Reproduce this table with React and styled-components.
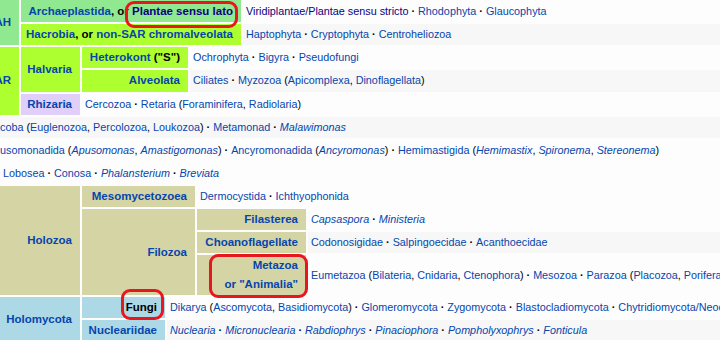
import React from 'react'
import styled, { createGlobalStyle } from 'styled-components'

const GREEN = '#90e890'
const LIME = '#adff2f'
const LAVENDER = '#e0cff8'
const OLIVE = '#d4d4a4'
const SKY = '#add8e6'

const GlobalStyle = createGlobalStyle`
  html, body {
    margin: 0;
    padding: 0;
    background: #fdfdfd;
  }
  body {
    font-family: "Liberation Sans", Arial, sans-serif;
    font-size: 10.8px;
    color: #000;
  }
`

const Navbox = styled.div`
  width: 720px;
  height: 340px;
  overflow: hidden;
  display: flex;
  flex-direction: column;
  gap: 2px;
  background: #fdfdfd;
  white-space: nowrap;
`

const Row = styled.div`
  display: flex;
  gap: 2px;
  height: ${p => (p.$h ? `${p.$h}px` : 'auto')};
  flex: 0 0 auto;
`

const Stack = styled.div`
  flex: 1 1 0;
  min-width: 0;
  display: flex;
  flex-direction: column;
  gap: 2px;
`

const Group = styled.div`
  flex: 0 0 ${p => p.$w}px;
  width: ${p => p.$w}px;
  box-sizing: border-box;
  padding-right: 8px;
  background: ${p => p.$bg};
  display: flex;
  align-items: center;
  justify-content: flex-end;
  text-align: right;
  font-weight: bold;
  font-size: 11.5px;
  line-height: 19px;
  color: #000;
`

const List = styled.div`
  flex: 1 1 0;
  min-width: 0;
  overflow: hidden;
  box-sizing: border-box;
  padding-left: ${p => (p.$cut ? 0 : 3)}px;
  background: ${p => (p.$even ? '#f7f7f7' : '#fdfdfd')};
  display: flex;
  align-items: center;
  line-height: 19px;
`

const Link = styled.span`
  color: ${p => (p.$visited ? '#0b0080' : '#0645ad')};
`

const Self = styled.span`
  color: #000;
`

const Dot = styled.b`
  font-weight: bold;
`

// red marker rings drawn over the screenshot
const Marked = styled.span`
  position: relative;
  display: inline-block;
  line-height: 19px;
`

const Ring = styled.span`
  position: absolute;
  top: ${p => p.$t}px;
  right: ${p => p.$r}px;
  bottom: ${p => p.$b}px;
  left: ${p => p.$l}px;
  border: 3.5px solid #e8161e;
  border-radius: 9px;
  pointer-events: none;
`

const Hlist = ({ items }) => (
  <span>
    {items.map((it, i) => (
      <React.Fragment key={i}>
        {i > 0 && <Dot> · </Dot>}
        {it}
      </React.Fragment>
    ))}
  </span>
)

const L = ({ children, v }) => <Link $visited={v}>{children}</Link>
const I = ({ children }) => <Link as="i">{children}</Link>

const App = () => (
  <>
    <GlobalStyle />
    <Navbox>
      <Row>
        <Group $w={19} $bg={GREEN}>
          <Link>AH</Link>
        </Group>
        <Stack>
          <Row $h={22}>
            <Group $w={220} $bg={GREEN}>
              <span>
                <Link>Archaeplastida</Link>, or{' '}
                <Marked>
                  <Link $visited>Plantae sensu lato</Link>
                  <Ring $t={-1} $r={-5} $b={-7} $l={-7} />
                </Marked>
              </span>
            </Group>
            <List>
              <Hlist
                items={[
                  <L v>Viridiplantae/Plantae sensu stricto</L>,
                  <L>Rhodophyta</L>,
                  <L>Glaucophyta</L>,
                ]}
              />
            </List>
          </Row>
          <Row $h={21.2}>
            <Group $w={220} $bg={LIME}>
              <span>
                <Link>Hacrobia</Link>, or <Link>non-SAR chromalveolata</Link>
              </span>
            </Group>
            <List $even>
              <Hlist items={[<L>Haptophyta</L>, <L>Cryptophyta</L>, <L>Centroheliozoa</L>]} />
            </List>
          </Row>
        </Stack>
      </Row>

      <Row>
        <Group $w={19} $bg={LIME}>
          <Link>AR</Link>
        </Group>
        <Stack>
          <Row>
            <Group $w={59} $bg={LIME}>
              <Link>Halvaria</Link>
            </Group>
            <Stack>
              <Row $h={21.2}>
                <Group $w={106} $bg={LIME}>
                  <span>
                    <Link>Heterokont</Link> ("S")
                  </span>
                </Group>
                <List>
                  <Hlist items={[<L>Ochrophyta</L>, <L>Bigyra</L>, <L>Pseudofungi</L>]} />
                </List>
              </Row>
              <Row $h={21.2}>
                <Group $w={106} $bg={LIME}>
                  <Link>Alveolata</Link>
                </Group>
                <List $even>
                  <Hlist
                    items={[
                      <L>Ciliates</L>,
                      <span>
                        <L>Myzozoa</L> (<L>Apicomplexa</L>, <L>Dinoflagellata</L>)
                      </span>,
                    ]}
                  />
                </List>
              </Row>
            </Stack>
          </Row>
          <Row $h={21.2}>
            <Group $w={59} $bg={LAVENDER}>
              <Link>Rhizaria</Link>
            </Group>
            <List>
              <Hlist
                items={[
                  <L>Cercozoa</L>,
                  <span>
                    <L>Retaria</L> (<L>Foraminifera</L>, <L>Radiolaria</L>)
                  </span>,
                ]}
              />
            </List>
          </Row>
        </Stack>
      </Row>

      <Row $h={21.2}>
        <List $even $cut>
          <Hlist
            items={[
              <span>
                <L>coba</L> (<L>Euglenozoa</L>, <L>Percolozoa</L>, <L>Loukozoa</L>)
              </span>,
              <L>Metamonad</L>,
              <I>Malawimonas</I>,
            ]}
          />
        </List>
      </Row>
      <Row $h={21.2}>
        <List $cut>
          <Hlist
            items={[
              <span>
                <L>usomonadida</L> (<I>Apusomonas</I>, <I>Amastigomonas</I>)
              </span>,
              <span>
                <L>Ancyromonadida</L> (<I>Ancyromonas</I>)
              </span>,
              <span>
                <L>Hemimastigida</L> (<I>Hemimastix</I>, <I>Spironema</I>, <I>Stereonema</I>)
              </span>,
            ]}
          />
        </List>
      </Row>
      <Row $h={21.2}>
        <List>
          <Hlist items={[<L>Lobosea</L>, <L>Conosa</L>, <I>Phalansterium</I>, <I>Breviata</I>]} />
        </List>
      </Row>

      <Row>
        <Group $w={80} $bg={OLIVE}>
          <Link>Holozoa</Link>
        </Group>
        <Stack>
          <Row $h={21}>
            <Group $w={113} $bg={OLIVE}>
              <Link>Mesomycetozoea</Link>
            </Group>
            <List>
              <Hlist items={[<L>Dermocystida</L>, <L>Ichthyophonida</L>]} />
            </List>
          </Row>
          <Row>
            <Group $w={113} $bg={OLIVE}>
              <Link>Filozoa</Link>
            </Group>
            <Stack>
              <Row $h={21}>
                <Group $w={109} $bg={OLIVE}>
                  <Link>Filasterea</Link>
                </Group>
                <List>
                  <Hlist items={[<I>Capsaspora</I>, <I>Ministeria</I>]} />
                </List>
              </Row>
              <Row $h={21}>
                <Group $w={109} $bg={OLIVE}>
                  <Link>Choanoflagellate</Link>
                </Group>
                <List $even>
                  <Hlist items={[<L>Codonosigidae</L>, <L>Salpingoecidae</L>, <L>Acanthoecidae</L>]} />
                </List>
              </Row>
              <Row $h={40}>
                <Group $w={109} $bg={OLIVE}>
                  <Marked>
                    <Link>
                      Metazoa
                      <br />
                      or "Animalia"
                    </Link>
                    <Ring $t={-2} $r={-10} $b={-4} $l={-15} />
                  </Marked>
                </Group>
                <List>
                  <Hlist
                    items={[
                      <span>
                        <L>Eumetazoa</L> (<L>Bilateria</L>, <L>Cnidaria</L>, <L>Ctenophora</L>)
                      </span>,
                      <L>Mesozoa</L>,
                      <span>
                        <L>Parazoa</L> (<L>Placozoa</L>, <L>Porifera</L>)
                      </span>,
                    ]}
                  />
                </List>
              </Row>
            </Stack>
          </Row>
        </Stack>
      </Row>

      <Row>
        <Group $w={80} $bg={SKY}>
          <Link>Holomycota</Link>
        </Group>
        <Stack>
          <Row $h={21}>
            <Group $w={83} $bg={SKY}>
              <Marked>
                <Self>Fungi</Self>
                <Ring $t={-9} $r={-7} $b={-3} $l={-5} />
              </Marked>
            </Group>
            <List>
              <Hlist
                items={[
                  <span>
                    <L>Dikarya</L> (<L>Ascomycota</L>, <L>Basidiomycota</L>)
                  </span>,
                  <L>Glomeromycota</L>,
                  <L>Zygomycota</L>,
                  <L>Blastocladiomycota</L>,
                  <L>Chytridiomycota/Neocallimastigomycota</L>,
                ]}
              />
            </List>
          </Row>
          <Row $h={21}>
            <Group $w={83} $bg={SKY}>
              <Link>Nucleariidae</Link>
            </Group>
            <List $even>
              <Hlist
                items={[
                  <I>Nuclearia</I>,
                  <I>Micronuclearia</I>,
                  <I>Rabdiophrys</I>,
                  <I>Pinaciophora</I>,
                  <I>Pompholyxophrys</I>,
                  <I>Fonticula</I>,
                ]}
              />
            </List>
          </Row>
        </Stack>
      </Row>
    </Navbox>
  </>
)

export default App
